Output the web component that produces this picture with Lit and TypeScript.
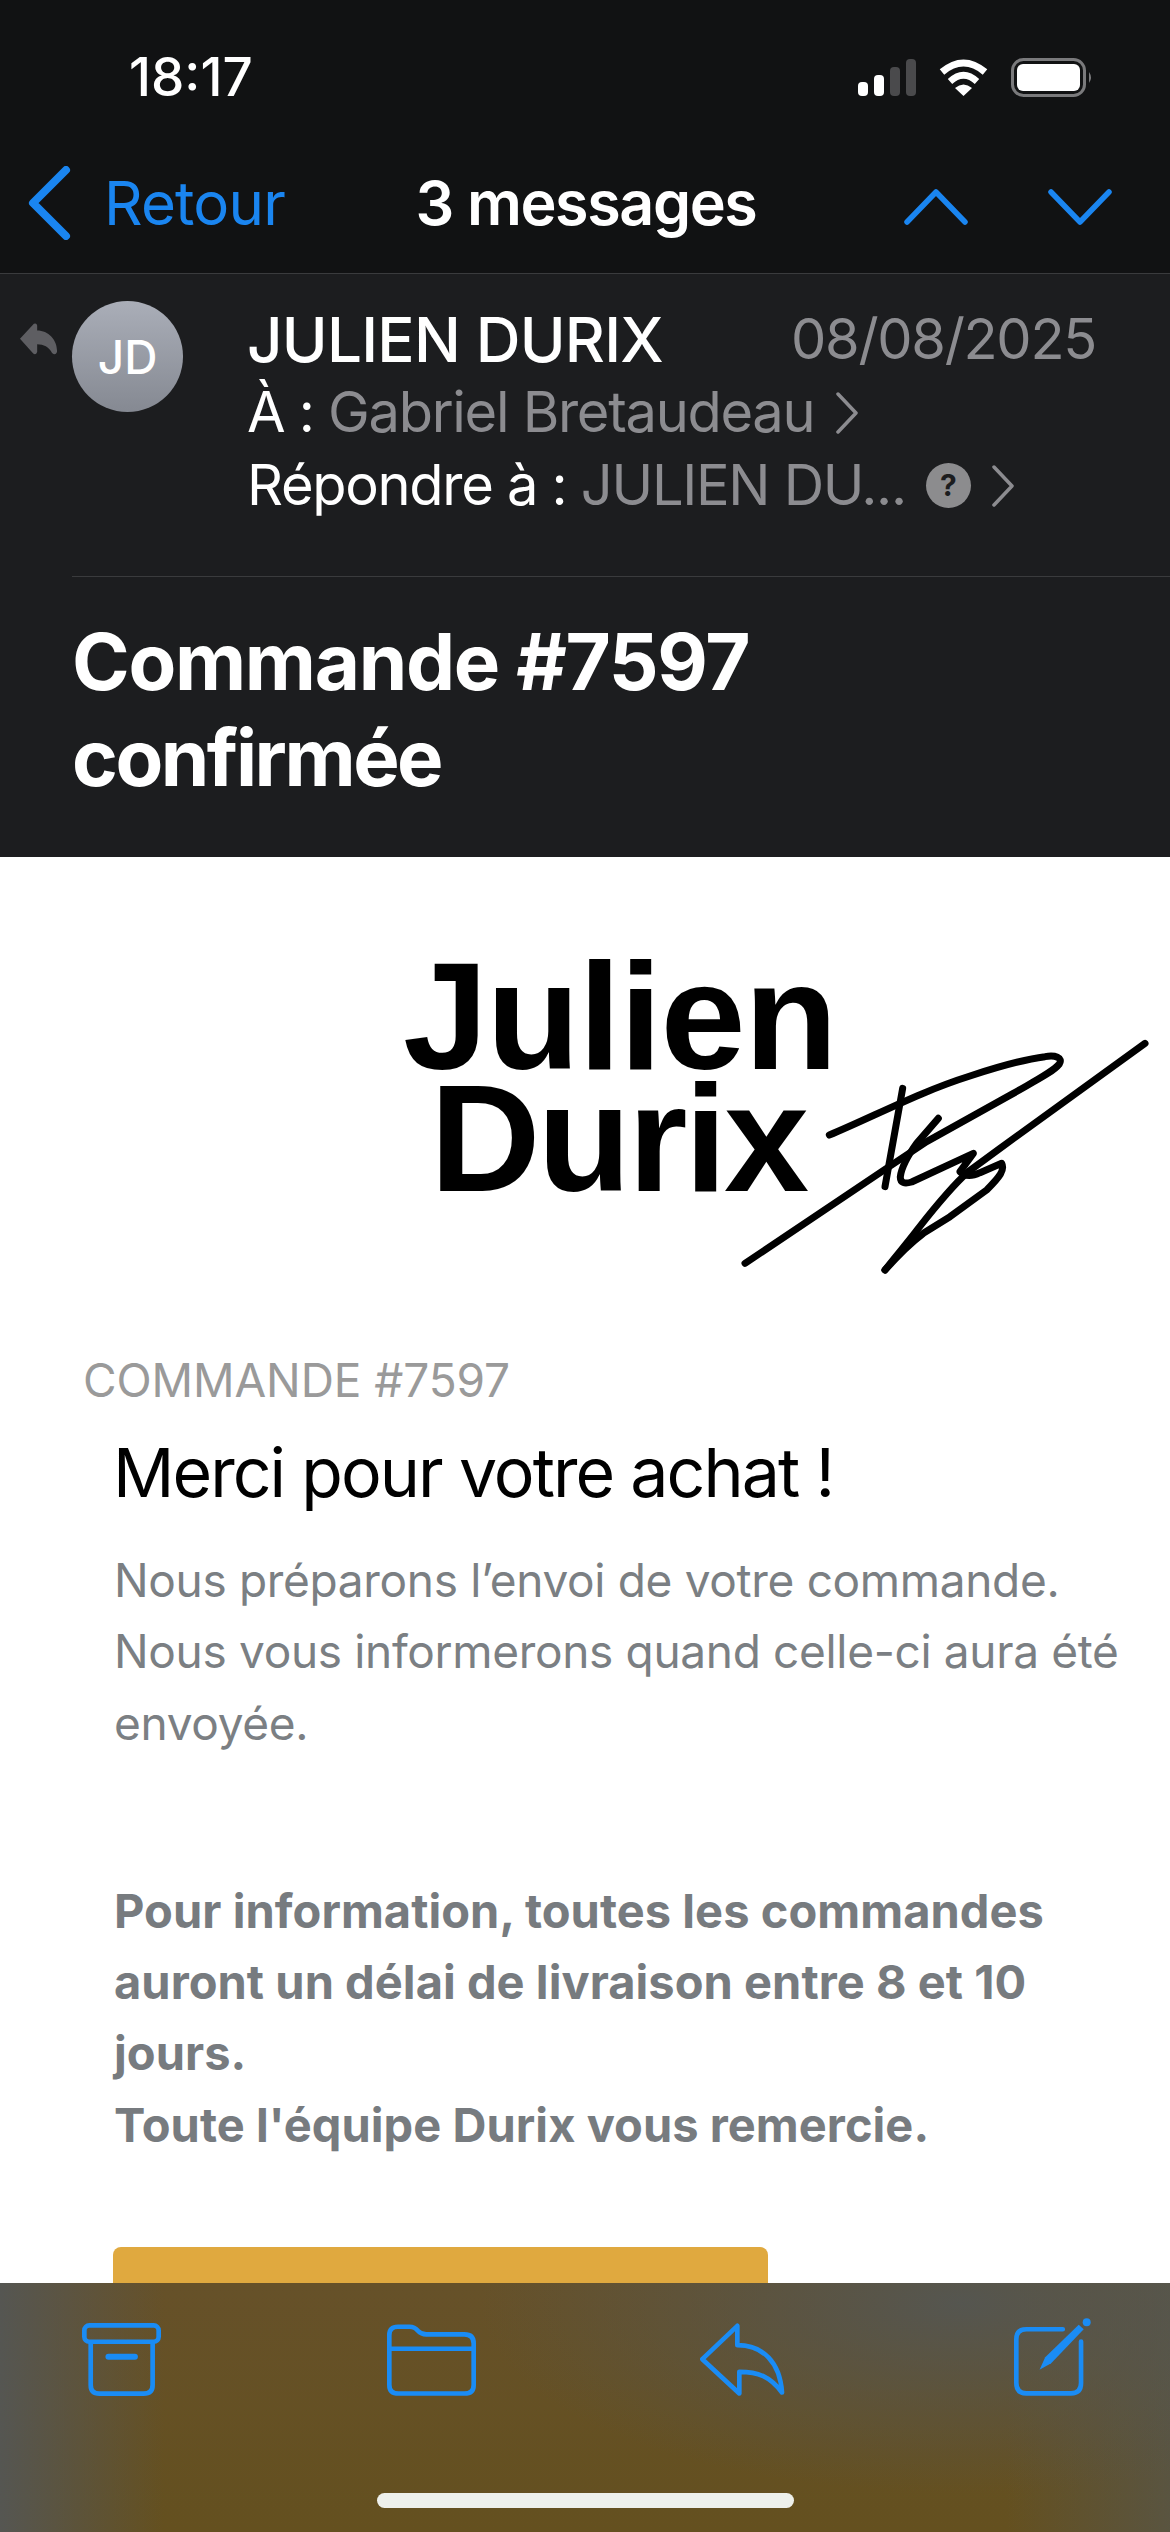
import { LitElement, css, html } from 'lit';
import { customElement } from 'lit/decorators.js';

@customElement('app-root')
export class AppRoot extends LitElement {
  static styles = css`
    :host {
      display: block;
      width: 1170px;
      height: 2532px;
      overflow: hidden;
      font-family: Inter, 'Noto Sans', sans-serif;
      background: #fff;
    }
    .screen {
      display: flex;
      flex-direction: column;
      height: 2532px;
    }
    svg {
      display: block;
      flex: none;
    }

    /* top bars */
    .top {
      height: 273px;
      background: #111213;
      flex: none;
    }
    .status {
      height: 154px;
      display: flex;
      justify-content: space-between;
      align-items: center;
      padding: 0 77px 0 129px;
      box-sizing: border-box;
    }
    .time {
      color: #fff;
      font-size: 53px;
      font-weight: 500;
    }
    .status-icons {
      display: flex;
      align-items: center;
      gap: 23px;
    }
    .nav {
      height: 97px;
      display: grid;
      grid-template-columns: 1fr auto 1fr;
      align-items: center;
      padding: 0 58px 0 28px;
    }
    .back {
      display: flex;
      align-items: center;
      gap: 32px;
      color: #1a85f0;
      font-size: 60px;
      letter-spacing: -0.8px;
    }
    .nav-title {
      padding-left: 32px;
      color: #fff;
      font-size: 61px;
      font-weight: 600;
      letter-spacing: -1.4px;
    }
    .arrows {
      display: flex;
      justify-content: flex-end;
      gap: 80px;
      margin-top: 8px;
    }

    /* mail header */
    .head {
      flex: none;
      height: 584px;
      box-sizing: border-box;
      background: #1c1d1f;
      border-top: 1px solid #3a3b3d;
      padding-top: 27px;
    }
    .sender {
      display: flex;
      padding-left: 19px;
    }
    .reply-mark {
      margin-top: 21px;
    }
    .avatar {
      flex: none;
      width: 111px;
      height: 111px;
      margin-left: 14px;
      border-radius: 50%;
      background: linear-gradient(#aaaeb8, #858992);
      color: #fff;
      font-size: 46px;
      font-weight: 500;
      display: flex;
      align-items: center;
      justify-content: center;
    }
    .who {
      flex: 1;
      margin-left: 64px;
      padding: 2px 74px 0 0;
      font-size: 56px;
      line-height: 73px;
      letter-spacing: -1.3px;
      color: #fff;
      white-space: nowrap;
    }
    .who-top {
      display: flex;
      justify-content: space-between;
    }
    .name {
      font-size: 62px;
      font-weight: 500;
      letter-spacing: -0.8px;
    }
    .muted {
      color: #8c8c90;
    }
    .who-row {
      display: flex;
      align-items: center;
    }
    .info-badge {
      width: 45px;
      height: 45px;
      margin: 0 20px 0 20px;
      border-radius: 50%;
      background: #8c8c8e;
      color: #1c1d1f;
      font-size: 30px;
      font-weight: 700;
      letter-spacing: 0;
      line-height: 45px;
      text-align: center;
    }
    .who-row .chev {
      margin-left: 21px;
    }
    .who-row .info-badge + .chev {
      margin-left: 0;
    }
    .head-line {
      height: 1px;
      margin: 54px 0 0 72px;
      background: #3a3b3d;
    }
    .subject {
      margin: 37px 0 0 72px;
      color: #fff;
      font-size: 78px;
      line-height: 96px;
      font-weight: 700;
      letter-spacing: -1.3px;
    }
    .subject-end {
      letter-spacing: -2.5px;
    }

    /* mail body */
    .mail {
      flex: 1;
      min-height: 0;
      overflow: hidden;
      background: #fff;
    }
    .logo-wrap {
      position: relative;
      height: 247px;
      margin-top: 98px;
    }
    .logo {
      margin-left: 403px;
      width: 430px;
      text-align: center;
      color: #000;
      font-family: 'Liberation Sans', Arial, sans-serif;
      font-size: 153px;
      line-height: 122px;
      font-weight: 700;
      letter-spacing: -3px;
    }
    .logo-top {
      letter-spacing: -1.5px;
    }
    .signature {
      position: absolute;
      left: 720px;
      top: 65px;
    }
    .order {
      margin: 148px 0 0 83px;
      color: #9a9a9a;
      font-size: 46px;
      line-height: 60px;
      letter-spacing: -0.1px;
    }
    .thanks {
      margin: 22px 0 0 113px;
      color: #000;
      font-size: 68px;
      line-height: 80px;
      letter-spacing: -1.95px;
    }
    .copy {
      margin: 33px 0 0 114px;
      color: #7b7f83;
      font-size: 46px;
      line-height: 71.3px;
      letter-spacing: -0.33px;
      white-space: nowrap;
    }
    .copy.strong {
      margin-top: 116px;
      font-size: 47px;
      font-weight: 700;
      letter-spacing: 0.05px;
      color: #777b7f;
    }
    .cta {
      width: 655px;
      height: 130px;
      margin: 87px 0 0 113px;
      border-radius: 8px;
      background: #e0a93f;
    }

    /* bottom toolbar */
    .toolbar {
      flex: none;
      height: 249px;
      box-sizing: border-box;
      padding-top: 35px;
      background:
        radial-gradient(ellipse 480px 190px at 960px 20px, rgba(84, 86, 82, 0.95), rgba(84, 86, 82, 0)),
        linear-gradient(90deg, #555652 0%, rgba(85, 86, 82, 0) 14%, rgba(85, 86, 82, 0) 86%, rgba(85, 86, 78, 0.7) 100%),
        linear-gradient(180deg, #665129 0%, #64501f 100%);
    }
    .tools {
      display: flex;
      align-items: flex-end;
      height: 78px;
      padding-left: 82px;
    }
    .tools svg:nth-child(2) {
      margin-left: 226px;
    }
    .tools svg:nth-child(3) {
      margin-left: 224px;
    }
    .tools svg:nth-child(4) {
      margin-left: 229px;
    }
    .home-bar {
      width: 417px;
      height: 15px;
      margin: 97px auto 0;
      border-radius: 8px;
      background: #eef0eb;
    }
  `;

  render() {
    return html`
      <div class="screen">
        <div class="top">
          <div class="status">
            <span class="time">18:17</span>
            <div class="status-icons">
              <svg width="58" height="37" viewBox="0 0 58 37">
                <rect x="0" y="23" width="10" height="14" rx="4" fill="#fff"></rect>
                <rect x="16" y="16" width="10" height="21" rx="4" fill="#fff"></rect>
                <rect x="32" y="8" width="10" height="29" rx="4" fill="#4a4a4c"></rect>
                <rect x="48" y="0" width="10" height="37" rx="4" fill="#4a4a4c"></rect>
              </svg>
              <svg width="49" height="37" viewBox="0 0 49 37">
                <path d="M3 13Q24.500 -5 46 13" fill="none" stroke="#fff" stroke-width="7"></path>
                <path d="M11 22.500Q24.500 10 38 22.500" fill="none" stroke="#fff" stroke-width="6.500"></path>
                <path d="M24.500 37L16 29Q24.500 22 33 29Z" fill="#fff"></path>
              </svg>
              <svg width="82" height="39" viewBox="0 0 82 39">
                <rect x="1.500" y="1.500" width="72" height="36" rx="11" fill="none" stroke="#7a7a7c" stroke-width="3"></rect>
                <rect x="6" y="6" width="63" height="27" rx="6" fill="#fff"></rect>
                <path d="M78 14Q82 19.500 78 25Z" fill="#7a7a7c"></path>
              </svg>
            </div>
          </div>
          <div class="nav">
            <div class="back">
              <svg width="44" height="74" viewBox="0 0 44 74">
                <path d="M38 4L5 37L38 70" fill="none" stroke="#1a85f0" stroke-width="8" stroke-linecap="round" stroke-linejoin="round"></path>
              </svg>
              <span>Retour</span>
            </div>
            <div class="nav-title">3 messages</div>
            <div class="arrows">
              <svg width="64" height="36" viewBox="0 0 64 36">
                <path d="M3 33L32 3L61 33" fill="none" stroke="#1a85f0" stroke-width="5.500" stroke-linecap="round" stroke-linejoin="round"></path>
              </svg>
              <svg width="64" height="36" viewBox="0 0 64 36">
                <path d="M3 3L32 33L61 3" fill="none" stroke="#1a85f0" stroke-width="5.500" stroke-linecap="round" stroke-linejoin="round"></path>
              </svg>
            </div>
          </div>
        </div>

        <div class="head">
          <div class="sender">
            <svg class="reply-mark" width="39" height="34" viewBox="55 125 118 102">
              <path d="M58 175L100 130Q108 126 110 135V150C145 150 172 180 170 215Q165 228 155 218C145 200 130 192 110 192V215Q106 226 98 220Z" fill="#5e5e62"></path>
            </svg>
            <div class="avatar">JD</div>
            <div class="who">
              <div class="who-top">
                <span class="name">JULIEN DURIX</span>
                <span class="muted">08/08/2025</span>
              </div>
              <div class="who-row">
                <span>À :&nbsp;</span><span class="muted">Gabriel Bretaudeau</span>
                <svg class="chev" width="24" height="42" viewBox="0 0 24 42">
                  <path d="M3 2L21 21L3 40" fill="none" stroke="#8c8c90" stroke-width="3.500" stroke-linecap="round" stroke-linejoin="round"></path>
                </svg>
              </div>
              <div class="who-row">
                <span>Répondre à :&nbsp;</span><span class="muted">JULIEN DU...</span>
                <span class="info-badge">?</span>
                <svg class="chev" width="24" height="42" viewBox="0 0 24 42">
                  <path d="M3 2L21 21L3 40" fill="none" stroke="#8c8c90" stroke-width="3.500" stroke-linecap="round" stroke-linejoin="round"></path>
                </svg>
              </div>
            </div>
          </div>
          <div class="head-line"></div>
          <div class="subject">Commande #7597<br /><span class="subject-end">confirmée</span></div>
        </div>

        <div class="mail">
          <div class="logo-wrap">
            <div class="logo"><span class="logo-top">Julien</span><br />Durix</div>
            <svg class="signature" width="450" height="270" viewBox="0 0 1350 810">
              <g fill="none" stroke="#000" stroke-width="21" stroke-linecap="round" stroke-linejoin="round">
                <path d="M75 730L485 455L620 365L880 220C950 180 1000 155 1018 132C1030 112 1005 105 975 110C900 120 820 145 750 168C600 215 460 290 328 345"></path>
                <path d="M548 205L495 500"></path>
                <path d="M655 295L590 370C565 405 545 440 541 470C540 490 555 492 575 486L760 400L720 455C735 470 755 470 780 458L845 430C855 450 840 470 800 510L690 590L610 640C570 670 535 705 495 750"></path>
                <path d="M1275 70L840 385L745 455C700 495 650 555 595 625C565 665 530 705 495 750"></path>
              </g>
            </svg>
          </div>

          <div class="order">COMMANDE #7597</div>
          <div class="thanks">Merci pour votre achat !</div>
          <div class="copy">
            Nous préparons l’envoi de votre commande.<br />
            Nous vous informerons quand celle-ci aura été<br />
            envoyée.
          </div>
          <div class="copy strong">
            Pour information, toutes les commandes<br />
            auront un délai de livraison entre 8 et 10<br />
            jours.<br />
            Toute l'équipe Durix vous remercie.
          </div>
          <div class="cta"></div>
        </div>

        <div class="toolbar">
          <div class="tools">
            <svg width="79" height="73" viewBox="66 70 236 218">
              <g fill="none" stroke="#1a8cf5" stroke-width="14" stroke-linecap="round">
                <rect x="73" y="77" width="222" height="49" rx="15"></rect>
                <path d="M92 128V255Q92 281 118 281H250Q277 281 277 255V128"></path>
                <path d="M145 171H224" stroke-width="18"></path>
              </g>
            </svg>
            <svg width="89" height="72" viewBox="982 72 268 216">
              <g fill="none" stroke="#1a8cf5" stroke-width="14" stroke-linejoin="round">
                <path d="M989 105Q989 80 1015 80H1050Q1065 80 1075 92Q1085 103 1100 103H1215Q1243 103 1243 130V255Q1243 281 1215 281H1017Q989 281 989 255Z"></path>
                <path d="M989 146H1243"></path>
              </g>
            </svg>
            <svg width="85" height="73" viewBox="60 72 255 218">
              <path d="M67 180L172 80V138C250 138 300 190 306 280C270 232 235 218 178 218V283Z" fill="none" stroke="#1a8cf5" stroke-width="14" stroke-linejoin="round"></path>
            </svg>
            <svg width="77" height="79" viewBox="1003 52 232 236">
              <path d="M1150 88H1040Q1010 88 1010 118V250Q1010 281 1040 281H1175Q1205 281 1205 250V125" fill="none" stroke="#1a8cf5" stroke-width="14" stroke-linecap="round"></path>
              <path d="M1080 210L1097 172L1198 74L1213 88L1115 190Z" fill="#1a8cf5"></path>
              <circle cx="1222" cy="67" r="12" fill="#1a8cf5"></circle>
            </svg>
          </div>
          <div class="home-bar"></div>
        </div>
      </div>
    `;
  }
}
